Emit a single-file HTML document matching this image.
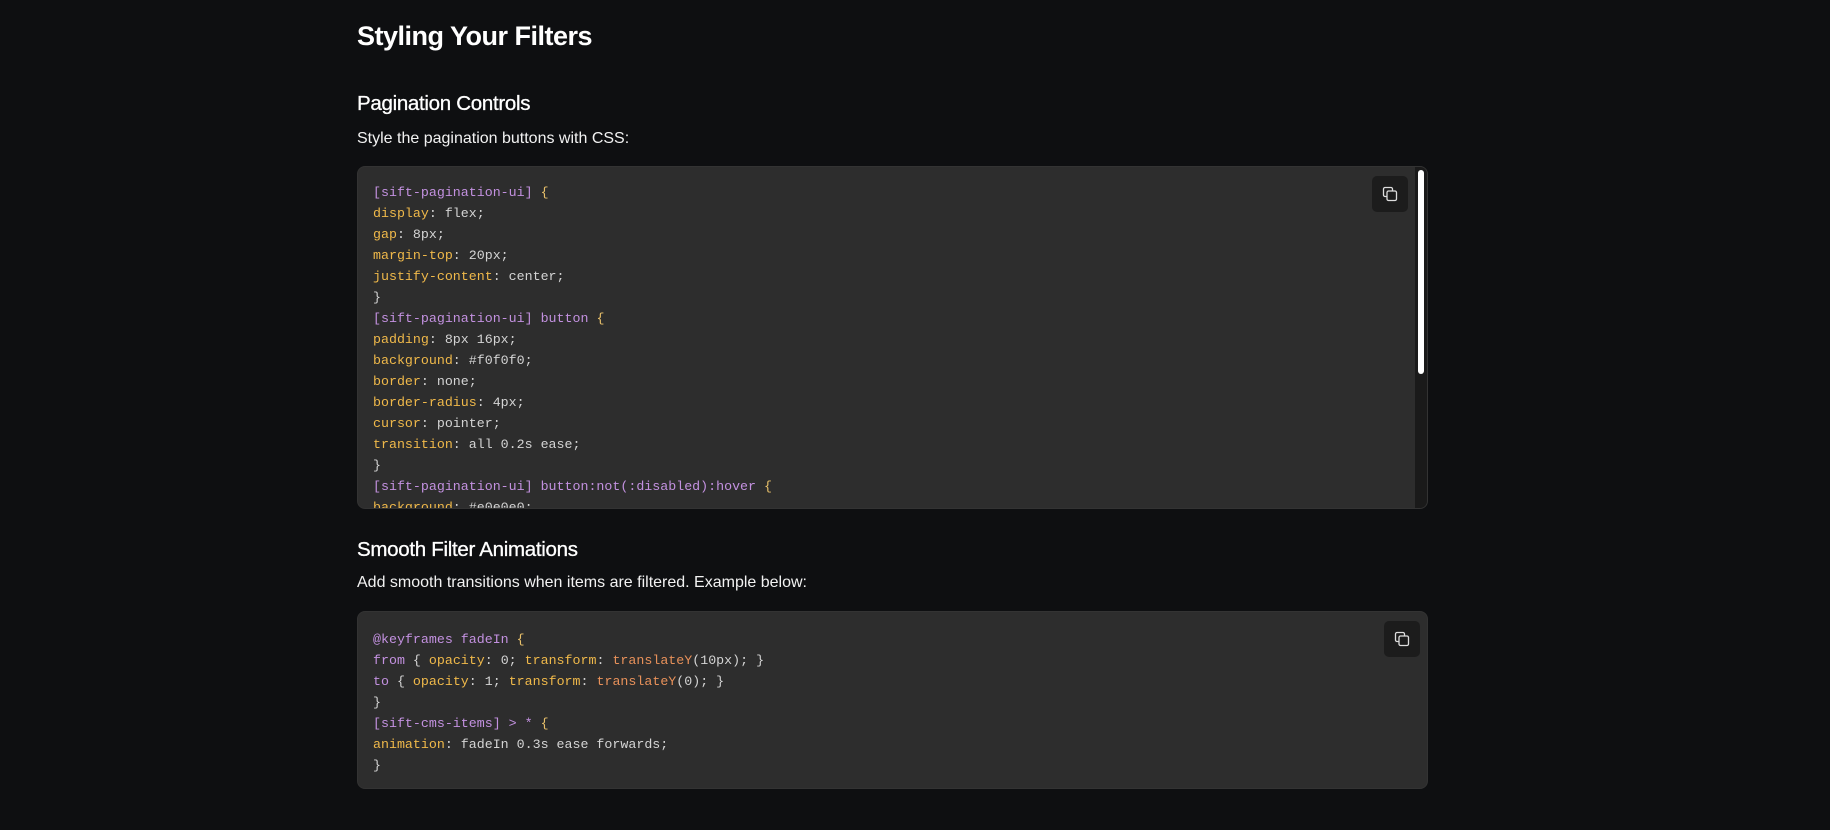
<!DOCTYPE html>
<html><head><meta charset="utf-8"><style>
*{margin:0;padding:0;box-sizing:border-box}
body{background:#0e0f11;width:1830px;height:830px;overflow:hidden;font-family:"Liberation Sans",sans-serif;color:#fff}
h2{position:absolute;left:357px;top:21px;font-size:27px;font-weight:700;letter-spacing:-0.5px}
h3{position:absolute;left:357px;font-size:20.5px;font-weight:500;letter-spacing:-0.3px;-webkit-text-stroke:0.3px #fff}
p{position:absolute;left:357px;font-size:16px;color:#f2f2f2}
.code{position:absolute;left:357px;width:1071px;background:#2d2d2d;border-radius:8px;border:1px solid #333;overflow:hidden}
pre{font-family:"Liberation Mono",monospace;font-size:13.3px;line-height:21px;color:#d4d4d4;padding:15px 15px}
.s{color:#c391e0}.k{color:#f0b94a}.f{color:#e8915a}.y{color:#e8c06a}
.btn{position:absolute;width:36px;height:36px;background:#1c1c1c;border-radius:5px}
.btn svg{position:absolute;left:10px;top:10px}
.track{position:absolute;right:0;top:0;width:12px;height:100%;background:#1a1a1a}
.thumb{position:absolute;right:3px;top:3px;width:6px;height:204px;background:#fff;border-radius:3px}
</style></head><body>
<h2>Styling Your Filters</h2>
<h3 style="top:92px">Pagination Controls</h3>
<p style="top:130px">Style the pagination buttons with CSS:</p>
<div class="code" style="top:166px;height:343px">
<pre><span class="s">[sift-pagination-ui]</span> <span class="y">{</span>
<span class="k">display</span>: flex;
<span class="k">gap</span>: 8px;
<span class="k">margin-top</span>: 20px;
<span class="k">justify-content</span>: center;
}
<span class="s">[sift-pagination-ui] button</span> <span class="y">{</span>
<span class="k">padding</span>: 8px 16px;
<span class="k">background</span>: #f0f0f0;
<span class="k">border</span>: none;
<span class="k">border-radius</span>: 4px;
<span class="k">cursor</span>: pointer;
<span class="k">transition</span>: all 0.2s ease;
}
<span class="s">[sift-pagination-ui] button:not(:disabled):hover</span> <span class="y">{</span>
<span class="k">background</span>: #e0e0e0;
}</pre>
<div class="btn" style="left:1014px;top:9px"><svg width="16" height="16" viewBox="0 0 16 16" fill="none" stroke="#ddd" stroke-width="1.3"><rect x="1.5" y="1.5" width="9" height="9" rx="1.5"/><rect x="5" y="5" width="9.5" height="9.5" rx="1.5" fill="#1c1c1c"/></svg></div>
<div class="track"><div class="thumb"></div></div>
</div>
<h3 style="top:538px">Smooth Filter Animations</h3>
<p style="top:574px">Add smooth transitions when items are filtered. Example below:</p>
<div class="code" style="top:611px;height:178px">
<pre style="padding-top:17px"><span class="s">@keyframes fadeIn</span> <span class="y">{</span>
<span class="s">from</span> { <span class="k">opacity</span>: 0; <span class="k">transform</span>: <span class="f">translateY</span>(10px); }
<span class="s">to</span> { <span class="k">opacity</span>: 1; <span class="k">transform</span>: <span class="f">translateY</span>(0); }
}
<span class="s">[sift-cms-items] &gt; *</span> <span class="y">{</span>
<span class="k">animation</span>: fadeIn 0.3s ease forwards;
}</pre>
<div class="btn" style="left:1026px;top:9px"><svg width="16" height="16" viewBox="0 0 16 16" fill="none" stroke="#ddd" stroke-width="1.3"><rect x="1.5" y="1.5" width="9" height="9" rx="1.5"/><rect x="5" y="5" width="9.5" height="9.5" rx="1.5" fill="#1c1c1c"/></svg></div>
</div>
</body></html>
